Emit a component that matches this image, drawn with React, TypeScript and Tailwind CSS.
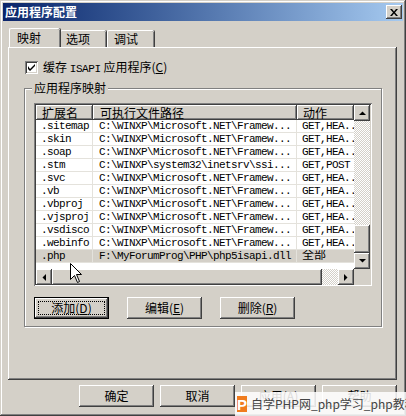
import React from 'react';

const raised =
    'shadow-[inset_-1px_-1px_#404040,inset_1px_1px_#ffffff,inset_-2px_-2px_#808080,inset_2px_2px_#d4d0c8]';
const checker =
    'bg-[image:repeating-conic-gradient(#ffffff_0_25%,#d4d0c8_0_50%)] bg-[length:2px_2px]';

const rows: [string, string, string][] = [
    ['.sitemap', 'C:\\WINXP\\Microsoft.NET\\Framew...', 'GET,HEA...'],
    ['.skin', 'C:\\WINXP\\Microsoft.NET\\Framew...', 'GET,HEA...'],
    ['.soap', 'C:\\WINXP\\Microsoft.NET\\Framew...', 'GET,HEA...'],
    ['.stm', 'C:\\WINXP\\system32\\inetsrv\\ssi...', 'GET,POST'],
    ['.svc', 'C:\\WINXP\\Microsoft.NET\\Framew...', 'GET,HEA...'],
    ['.vb', 'C:\\WINXP\\Microsoft.NET\\Framew...', 'GET,HEA...'],
    ['.vbproj', 'C:\\WINXP\\Microsoft.NET\\Framew...', 'GET,HEA...'],
    ['.vjsproj', 'C:\\WINXP\\Microsoft.NET\\Framew...', 'GET,HEA...'],
    ['.vsdisco', 'C:\\WINXP\\Microsoft.NET\\Framew...', 'GET,HEA...'],
    ['.webinfo', 'C:\\WINXP\\Microsoft.NET\\Framew...', 'GET,HEA...'],
    ['.php', 'F:\\MyForumProg\\PHP\\php5isapi.dll', '全部'],
];

const Arrow = ({ dir }: { dir: 'up' | 'down' | 'left' | 'right' }) => {
    const pts = {
        up: '0,4 7,4 3.5,0.5',
        down: '0,0 7,0 3.5,3.5',
        left: '4,0 4,7 0.5,3.5',
        right: '0,0 0,7 3.5,3.5',
    }[dir];
    const vert = dir === 'up' || dir === 'down';
    return (
        <div className={`flex h-[16px] w-[16px] shrink-0 items-center justify-center bg-[#d4d0c8] ${raised}`}>
            <svg width={vert ? 7 : 4} height={vert ? 4 : 7}>
                <polygon points={pts} fill="#000" />
            </svg>
        </div>
    );
};

const Btn = ({ children, focus }: { children: React.ReactNode; focus?: boolean }) =>
    focus ? (
        <div className="h-[22px] w-[75px] border border-black">
            <div className={`flex h-full w-full items-center justify-center bg-[#d4d0c8] p-[3px] ${raised}`}>
                <div className="flex h-full w-full items-center justify-center border border-dotted border-black text-[12px]">
                    {children}
                </div>
            </div>
        </div>
    ) : (
        <div className={`flex h-[22px] w-[75px] items-center justify-center bg-[#d4d0c8] text-[12px] ${raised}`}>
            {children}
        </div>
    );

const Cursor = () => (
    <svg className="absolute left-[70px] top-[263px]" width="13" height="21" viewBox="0 0 13 21">
        <path d="M0.5 0.5 L0.5 16.5 L4.5 12.5 L7.5 19.5 L9.5 18.5 L6.5 11.5 L11.5 11.5 Z" fill="#fff" stroke="#000" />
    </svg>
);

export default function App() {
    return (
        <div className="relative h-[416px] w-[406px] overflow-hidden bg-[#d4d0c8] px-[3px] pt-[3px] font-[family-name:'Noto_Sans_CJK_SC',sans-serif] text-black shadow-[inset_-1px_-1px_#404040,inset_1px_1px_#d4d0c8,inset_-2px_-2px_#808080,inset_2px_2px_#ffffff]">
            {/* title bar */}
            <div className="flex h-[18px] items-center justify-between bg-gradient-to-r from-[#0a246a] to-[#a6caf0] pl-[2px] pr-[1px]">
                <span className="text-[12px] font-bold leading-none text-white">应用程序配置</span>
                <div className={`flex h-[14px] w-[16px] items-center justify-center bg-[#d4d0c8] ${raised}`}>
                    <svg width="8" height="7" viewBox="0 0 8 7">
                        <path d="M0 0 L2 0 L4 2.5 L6 0 L8 0 L5 3.5 L8 7 L6 7 L4 4.5 L2 7 L0 7 L3 3.5 Z" fill="#000" />
                    </svg>
                </div>
            </div>

            {/* tabs */}
            <div className="ml-[6px] mt-[7px] flex h-[19px] items-end">
                <div className="relative z-10 flex h-[19px] w-[51px] items-center rounded-t-[2px] border-l border-t border-white bg-[#d4d0c8] pl-[7px] text-[12px] shadow-[1px_0_#404040,inset_-1px_0_#808080]">
                    映射
                </div>
                <div className="flex h-[17px] w-[46px] items-center rounded-t-[2px] border-l border-t border-white pl-[5px] text-[12px] shadow-[1px_0_#404040,inset_-1px_0_#808080]">
                    选项
                </div>
                <div className="ml-[1px] flex h-[17px] w-[47px] items-center rounded-t-[2px] border-l border-t border-white pl-[6px] text-[12px] shadow-[1px_0_#404040,inset_-1px_0_#808080]">
                    调试
                </div>
            </div>

            {/* tab panel */}
            <div className="ml-[5px] h-[333px] w-[389px] bg-[#d4d0c8] pl-[16px] pt-[14px] shadow-[inset_-1px_-1px_#404040,inset_1px_1px_#ffffff,inset_-2px_-2px_#808080]">
                <div className="ml-[1px] flex h-[13px] items-center gap-[5px] text-[12px]">
                    <div className="flex h-[13px] w-[13px] items-center justify-center bg-white shadow-[inset_1px_1px_#808080,inset_-1px_-1px_#ffffff,inset_2px_2px_#404040,inset_-2px_-2px_#d4d0c8]">
                        <svg width="7" height="7" viewBox="0 0 7 7">
                            <path d="M0 2 L0 5 L2 7 L7 2 L7 0 L2 5 Z" fill="#000" />
                        </svg>
                    </div>
                    <span className="leading-none">
                        缓存 <span className="font-[family-name:'Liberation_Mono',monospace] text-[11px] tracking-[-0.4px]">ISAPI</span> 应用程序(<u>C</u>)
                    </span>
                </div>

                {/* group box */}
                <div className="relative mt-[14px] h-[239px] w-[358px] border border-[#808080] pl-[9px] pt-[14px] shadow-[inset_1px_1px_#ffffff,1px_1px_#ffffff]">
                    <span className="absolute -top-[9px] left-[7px] bg-[#d4d0c8] px-[2px] text-[12px] leading-[16px]">
                        应用程序映射
                    </span>

                    {/* list view */}
                    <div className="h-[183px] w-[338px] bg-white p-[2px] shadow-[inset_1px_1px_#808080,inset_-1px_-1px_#ffffff,inset_2px_2px_#404040,inset_-2px_-2px_#d4d0c8]">
                        <div className="flex h-[164px]">
                            <div className="w-[318px]">
                                <div className="flex h-[15px] text-[12px] leading-none">
                                    <div className={`flex w-[57px] items-center bg-[#d4d0c8] pl-[6px] ${raised}`}>扩展名</div>
                                    <div className={`flex w-[204px] items-center bg-[#d4d0c8] pl-[7px] ${raised}`}>可执行文件路径</div>
                                    <div className={`flex w-[57px] items-center bg-[#d4d0c8] pl-[6px] ${raised}`}>动作</div>
                                </div>
                                <div className="font-[family-name:'Liberation_Mono','Noto_Sans_CJK_SC',monospace] text-[11px] leading-[12px] tracking-[-0.6px]">
                                    {rows.map(([ext, path, act], i) => (
                                        <div
                                            key={ext}
                                            className={`flex h-[13px] border-b border-[#e4e2dc] ${i === rows.length - 1 ? 'bg-[#d4d0c8]' : ''}`}
                                        >
                                            <div className="w-[57px] overflow-hidden whitespace-nowrap border-r border-[#e4e2dc] pl-[5px]">{ext}</div>
                                            <div className="w-[204px] overflow-hidden whitespace-nowrap border-r border-[#e4e2dc] pl-[6px]">{path}</div>
                                            <div className="w-[57px] overflow-hidden whitespace-nowrap pl-[5px]">
                                                {act === '全部' ? <span className="text-[12px] tracking-normal">{act}</span> : act}
                                            </div>
                                        </div>
                                    ))}
                                </div>
                            </div>
                            {/* vertical scrollbar */}
                            <div className="flex w-[16px] flex-col">
                                <Arrow dir="up" />
                                <div className={`h-[104px] ${checker}`} />
                                <div className={`h-[28px] bg-[#d4d0c8] ${raised}`} />
                                <Arrow dir="down" />
                            </div>
                        </div>
                        {/* horizontal scrollbar */}
                        <div className="flex h-[15px]">
                            <Arrow dir="left" />
                            <div className={`h-[16px] w-[270px] bg-[#d4d0c8] ${raised}`} />
                            <div className={`h-[16px] w-[16px] ${checker}`} />
                            <Arrow dir="right" />
                            <div className="w-[16px] bg-[#d4d0c8]" />
                        </div>
                    </div>

                    <div className="mt-[11px] flex gap-[18px]">
                        <Btn focus>
                            添加(<u>D</u>)
                        </Btn>
                        <Btn>
                            编辑(<u>E</u>)
                        </Btn>
                        <Btn>
                            删除(<u>R</u>)
                        </Btn>
                    </div>
                </div>
            </div>

            {/* dialog buttons */}
            <div className="mt-[5px] flex justify-end gap-[6px] pr-[6px]">
                <Btn>确定</Btn>
                <Btn>取消</Btn>
                <Btn>
                    应用(<u>A</u>)
                </Btn>
                <Btn>帮助</Btn>
            </div>

            <Cursor />

            {/* watermark */}
            <div className="absolute bottom-0 left-[235px] right-0 top-[392px] flex items-center gap-[4px] bg-white/85 pl-[2px]">
                <div className="flex h-[16px] w-[16px] items-center justify-center bg-[#f07c1e] font-[family-name:'Liberation_Sans',sans-serif] text-[15px] font-bold leading-none text-white">
                    P
                </div>
                <span className="whitespace-nowrap text-[12px] text-[#444]">自学PHP网_php学习_php教程</span>
            </div>
        </div>
    );
}
